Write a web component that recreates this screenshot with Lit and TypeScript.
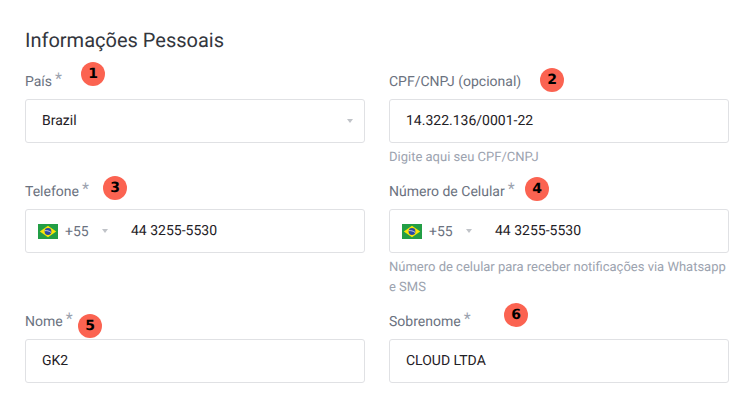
import { LitElement, html, css } from "lit";
import { customElement } from "lit/decorators.js";

const flag = html`<svg class="flag" width="20" height="15" viewBox="0 0 20 15"><rect width="20" height="15" fill="#229e45"/><path d="M10 1.8 18.2 7.5 10 13.2 1.8 7.5Z" fill="#f8e509"/><circle cx="10" cy="7.5" r="3.4" fill="#2b49a3"/><path d="M6.8 6.7c2.2-.3 4.5.3 6.2 1.7" fill="none" stroke="#fff" stroke-width=".7"/></svg>`;

const caret = html`<span class="caret"></span>`;

@customElement("app-root")
export class AppRoot extends LitElement {
  static styles = css`
    :host { display: block; width: 747px; height: 418px; overflow: hidden; background: #fff; font-family: Roboto, "Liberation Sans", sans-serif; text-rendering: geometricPrecision; }
    .page { box-sizing: border-box; padding: 30px 18px 0 25px; }
    h1 { margin: 0 0 20px; font-size: 20px; line-height: 20px; font-weight: 400; color: #33363d; }
    .grid { display: grid; grid-template-columns: 340px 340px; column-gap: 24px; row-gap: 12px; }
    .field { position: relative; min-width: 0; }
    label { display: block; box-sizing: border-box; height: 20px; padding-top: 2px; line-height: 20px; margin-bottom: 9px; font-size: 14px; color: #6b7280; }
    .req { color: #9ca3af; font-size: 16px; margin-left: 3px; position: relative; top: -2px; line-height: 0; }
    .box { box-sizing: border-box; height: 44px; border: 1px solid #e0e1e4; border-radius: 3px; display: flex; align-items: center; padding: 0 11px 0 16px; font-size: 14px; color: #1f2126; }
    .value { flex: 1; }
    .caret { width: 0; height: 0; border-left: 3.5px solid transparent; border-right: 3.5px solid transparent; border-top: 4px solid #c0c3c8; }
    .phone { padding-left: 12px; }
    .flag { flex: none; margin-right: 7px; }
    .code { color: #6b7280; width: 37px; position: relative; top: 1px; }
    .phone .value { margin-left: 23px; }
    .hint { margin: 5px 0 0; font-size: 13px; line-height: 20px; color: #9ca3af; }
    .badge { position: absolute; width: 24px; height: 24px; border-radius: 50%; background: #fb6351; color: #000; display: flex; align-items: center; justify-content: center; font: 700 14px "DejaVu Sans", sans-serif; }
    .b1 { left: 56px; top: -8px; }
    .b2 { left: 151px; top: -2px; }
    .b3 { left: 78px; top: -4px; }
    .b4 { left: 136px; top: -3px; }
    .b5 { left: 53px; top: 4px; }
    .b6 { left: 115px; top: -7px; }
  `;

  render() {
    const phone = html`<div class="box phone">${flag}<span class="code">+55</span>${caret}<span class="value">44 3255-5530</span></div>`;
    return html`<div class="page">
      <h1>Informações Pessoais</h1>
      <div class="grid">
        <div class="field"><label>País<span class="req">*</span></label><span class="badge b1">1</span>
          <div class="box"><span class="value">Brazil</span>${caret}</div></div>
        <div class="field"><label>CPF/CNPJ (opcional)</label><span class="badge b2">2</span>
          <div class="box"><span class="value">14.322.136/0001-22</span></div>
          <p class="hint">Digite aqui seu CPF/CNPJ</p></div>
        <div class="field"><label>Telefone<span class="req">*</span></label><span class="badge b3">3</span>${phone}</div>
        <div class="field"><label>Número de Celular<span class="req">*</span></label><span class="badge b4">4</span>${phone}
          <p class="hint">Número de celular para receber notificações via Whatsapp e SMS</p></div>
        <div class="field"><label>Nome<span class="req">*</span></label><span class="badge b5">5</span>
          <div class="box"><span class="value">GK2</span></div></div>
        <div class="field"><label>Sobrenome<span class="req">*</span></label><span class="badge b6">6</span>
          <div class="box"><span class="value">CLOUD LTDA</span></div></div>
      </div>
    </div>`;
  }
}
